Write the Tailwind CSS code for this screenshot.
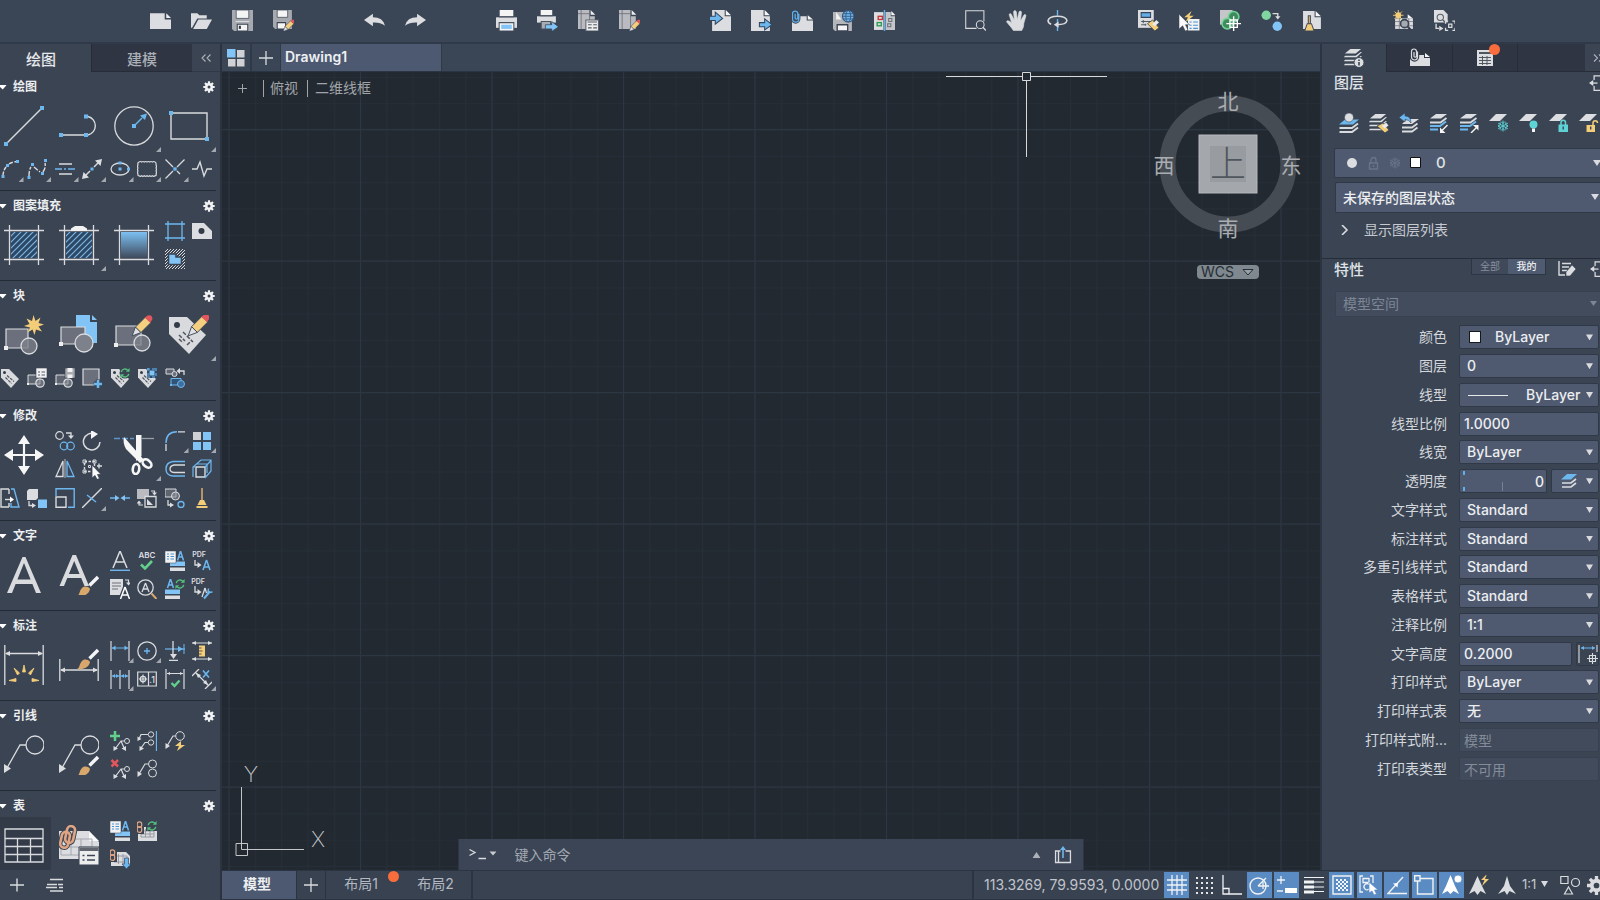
<!DOCTYPE html>
<html lang="zh-CN">
<head>
<meta charset="utf-8">
<meta name="viewport" content="width=device-width, initial-scale=1">
<title>Drawing1</title>
<script src="https://cdn.jsdelivr.net/npm/@tailwindcss/browser@4"></script>
</head>
<body class="flex h-screen flex-col overflow-hidden bg-[#3a4453] font-[Inter,'Noto_Sans_CJK_SC',sans-serif] text-sm text-[#dfe2e6] [&_svg]:shrink-0 [&_svg]:fill-none [&_svg]:stroke-[#d9dbde]">

<svg class="absolute size-0" aria-hidden="true">
<defs>
  <linearGradient id="fade" x1="0" y1="0" x2="0" y2="1"><stop offset="0" stop-color="#7cc0f3"/><stop offset="1" stop-color="#3f4a5c"/></linearGradient>
  <pattern id="minor" width="26.3" height="26.3" patternUnits="userSpaceOnUse" x="6.5" y="5"><path d="M0 .5H27M.5 0V27" stroke="#262e37"/></pattern>
  <pattern id="major" width="131.5" height="131.5" patternUnits="userSpaceOnUse" x="138" y="57"><path d="M0 .5H132M.5 0V132" stroke="#2d3644"/></pattern>
  <pattern id="hatch" width="6" height="6" patternUnits="userSpaceOnUse"><path d="M-1 7L7 -1M-1 1L1 -1M5 7L7 5" stroke="#7fb4de" stroke-width="1.2"/></pattern>
  <pattern id="hatch2" width="3" height="3" patternUnits="userSpaceOnUse"><path d="M-1 4L4 -1M-1 1L1 -1M2 4L4 2" stroke="#d9dbde" stroke-width="1"/></pattern>
</defs>

<!-- shared parts -->
<symbol id="brush" viewBox="0 0 22 22"><path d="M21 2L12.500 10.500" stroke="#f4f5f6" stroke-width="3.400"/><path d="M0 21c3-1 2-5 5-8 3-3 7-1 8 1-1 6-8 8-13 7z" fill="#d8a76c" stroke="none"/></symbol>
<symbol id="pencil" viewBox="0 0 20 20"><path d="M4 11L13 2l5 5-9 9z" fill="#f3cf7f" stroke="#3a4453" stroke-width=".8"/><path d="M12.500 2.500L15 .5q3-1 4 1t0 3L17.500 7z" fill="#e2565d" stroke="none"/><path d="M4 11l5 5-8 3z" fill="#dfe1e4" stroke="#3a4453" stroke-width=".8"/></symbol>
<symbol id="cycle" viewBox="0 0 12 12"><path d="M1.500 5a4.500 4.500 0 0 1 8-2M10.500 7a4.500 4.500 0 0 1-8 2" stroke="#55c07c" stroke-width="1.700"/><path d="M11.500 0v4.500H7zM.5 12V7.500H5z" fill="#55c07c" stroke="none"/></symbol>
<symbol id="gear" viewBox="0 0 12 12"><path d="M6 .3V11.700M.3 6H11.700M2 2L10 10M10 2L2 10" stroke="#f2f3f5" stroke-width="2.200"/><circle cx="6" cy="6" r="2.900" stroke="#f2f3f5" stroke-width="2.200"/><circle cx="6" cy="6" r="1.500" fill="#3a4453" stroke="none"/></symbol>
<symbol id="link" viewBox="0 0 8 16"><rect x="1.200" y="1" width="5.500" height="7" rx="2.700" stroke="#e0a483" stroke-width="1.500"/><rect x="1.200" y="7" width="5.500" height="7" rx="2.700" stroke="#e0a483" stroke-width="1.500"/></symbol>
<symbol id="stack" viewBox="0 0 20 20"><g fill="#dcdde0" stroke="none"><path d="M7 1H19L13 6H1z"/><path d="M1 8.500H13L18.500 4.500H20L14 10.300H0z"/><path d="M1 13H13L18.500 9H20L14 14.800H0z"/><path d="M1 17.500H13L18.500 13.500H20L14 19.300H0z"/></g></symbol>

<!-- top bar -->
<symbol id="new" viewBox="0 0 20 20"><path d="M0 3H14V9H20V18H0z" fill="#dcdde0" stroke="none"/><path d="M15.500 3L20 7.500H15.500z" fill="#eee" stroke="none"/></symbol>
<symbol id="open" viewBox="0 0 20 20"><path d="M0 3H6L8 5H15V8H6L1 17H0z" fill="#dcdde0" stroke="none"/><path d="M7 9H20L15 18H2z" fill="#dcdde0" stroke="none"/></symbol>
<symbol id="save" viewBox="0 0 20 20"><path d="M0 0H20V20H2L0 18z" fill="#a6a9af" stroke="none"/><path d="M4 0H16V8H4z" fill="#f4f4f4" stroke="#4b5361" stroke-width=".8"/><path d="M3.500 11H16.500" stroke="#d9dbde"/><path d="M5 13.500H15V20H5z" fill="#f4f4f4" stroke="#3c4452"/><path d="M6.500 15h2v3h-2z" fill="#333b48" stroke="none"/></symbol>
<symbol id="saveas" viewBox="0 0 20 20"><path d="M0 0H18V18H2L0 16z" fill="#a6a9af" stroke="none"/><path d="M4 0H14V7H4z" fill="#f4f4f4" stroke="#4b5361" stroke-width=".8"/><path d="M4 12H12V18H4z" fill="#f4f4f4" stroke="#3c4452"/><use href="#pencil" x="9" y="9" width="12" height="12"/></symbol>
<symbol id="undo" viewBox="0 0 20 20"><path d="M0 9.500L8.500 3.500V7Q18 7 20 15Q15 11.500 8.500 12V15.500z" fill="#dcdde0" stroke="none"/></symbol>
<symbol id="redo" viewBox="0 0 20 20"><path d="M20 9.500L11.500 3.500V7Q2 7 0 15Q5 11.500 11.500 12V15.500z" fill="#dcdde0" stroke="none"/></symbol>
<symbol id="print" viewBox="0 0 20 20"><path d="M3.500 0H16.500V6H3.500z" fill="#f4f4f4" stroke="none"/><path d="M0 7H20V17H0z" fill="#dcdde0" stroke="none"/><path d="M3 6.500H17" stroke="#4b5361"/><path d="M3 12H17V20H3z" fill="#f4f4f4" stroke="#4b5361"/><path d="M5 14H15V18H5z" fill="#82c4f5" stroke="none"/></symbol>
<symbol id="printsend" viewBox="0 0 20 20"><path d="M3.500 0H14.500V5H3.500z" fill="#f4f4f4" stroke="none"/><path d="M0 6H18V12H0z" fill="#dcdde0" stroke="none"/><path d="M3 5.500H15" stroke="#4b5361"/><path d="M4 11H13V18H4z" fill="#a9adb3" stroke="#4b5361"/><path d="M8 14H14V11L20.500 16 14 20.500V18H8z" fill="#82c4f5" stroke="#34465c" stroke-width=".7"/></symbol>
<symbol id="pageset" viewBox="0 0 20 20"><path d="M0 0H11V6H16V18H0z" fill="#b9bbc0" stroke="none"/><path d="M12 0L16.500 4.500H12z" fill="#eee" stroke="none"/><path d="M3 0V18M0 3.500H12M11 0V18" stroke="#6c7078" stroke-width=".8"/><path d="M7.500 9.500H19.500V20H7.500z" fill="#eceded" stroke="#5c626d"/><path d="M9.500 14H13M14.500 14H18M9.500 17H13M14.500 17H18M9 11.500H18" stroke="#555b66"/></symbol>
<symbol id="pageedit" viewBox="0 0 20 20"><path d="M0 0H11V6H16V18H0z" fill="#b9bbc0" stroke="none"/><path d="M12 0L16.500 4.500H12z" fill="#eee" stroke="none"/><path d="M3 0V18M0 3.500H12M11 0V18" stroke="#6c7078" stroke-width=".8"/><use href="#pencil" x="9" y="9" width="12" height="12"/></symbol>
<symbol id="import" viewBox="0 0 20 20"><path d="M2 0H14V6H20V20H2z" fill="#dcdde0" stroke="none"/><path d="M15 0L20 5H15z" fill="#f7f7f7" stroke="none"/><path d="M-1 6H5V2L12 8 5 13.500V10H-1z" fill="#6db7ef" stroke="#34465c"/></symbol>
<symbol id="export" viewBox="0 0 20 20"><path d="M0 0H12V6H18V20H0z" fill="#dcdde0" stroke="none"/><path d="M13 0L18 5H13z" fill="#f7f7f7" stroke="none"/><path d="M8 12H13V8.500L20 14 13 19V16H8z" fill="#6db7ef" stroke="#34465c"/></symbol>
<symbol id="attach" viewBox="0 0 20 20"><path d="M0 6H14V10H20V20H0z" fill="#dcdde0" stroke="none"/><path d="M15 5L20 9H15z" fill="#f7f7f7" stroke="none"/><path d="M6.500 3.500V8.500a3 3 0 0 1-6 0V3.500a2.500 2.500 0 0 1 5 0V8a1.500 1.500 0 0 1-2.500 0V3.500" stroke="#3a4453" stroke-width="3"/><path d="M6.500 3.500V8.500a3 3 0 0 1-6 0V3.500a2.500 2.500 0 0 1 5 0V8a1.500 1.500 0 0 1-2.500 0V3.500" stroke="#5fb0ec" stroke-width="1.200"/></symbol>
<symbol id="saveweb" viewBox="0 0 20 20"><path d="M0 2H18V20H2L0 18z" fill="#b4b6bb" stroke="none"/><path d="M4 14H14V20H4z" fill="#f4f4f4" stroke="#3c4452" stroke-width="1.300"/><path d="M3 2V9H8" fill="#f4f4f4" stroke="none"/><circle cx="14.500" cy="6" r="5.500" fill="#6db7ef" stroke="#35557a"/><ellipse cx="14.500" cy="6" rx="2.300" ry="5.500" stroke="#35557a" stroke-width=".8"/><path d="M9 6H20M10 3.500H19M10 8.500H19" stroke="#35557a" stroke-width=".8"/></symbol>
<symbol id="compare" viewBox="0 0 20 20"><path d="M0 2H9V19H0z" fill="#dcdde0" stroke="none"/><path d="M11 2H16V6H20V19H11z" fill="#c3c5c9" stroke="none"/><path d="M16.500 1L20.500 5H16.500z" fill="#f7f7f7" stroke="none"/><path d="M10 0V20" stroke="#62aee6" stroke-width="1.400"/><rect x="4" y="6" width="4" height="3" stroke="#c33" stroke-width="1.300"/><rect x="3" y="12" width="4" height="3" stroke="#2b9a55" stroke-width="1.300"/><path d="M14 8h3v3h-3zM13 13h3v3h-3z" stroke="#6b7078"/></symbol>
<symbol id="zoomwin" viewBox="0 0 20 20"><path d="M11 17.500H.7V.7H18V11"/><circle cx="14.500" cy="14" r="3.700"/><path d="M17 16.500L20 19.500" stroke-width="1.400"/></symbol>
<symbol id="pan" viewBox="0 0 20 20"><path d="M7 19.500C5 16 2 13.500.5 11.200 1 9.500 3 10 5.500 12.500L3 4.500Q3.500 2.500 5 4L8 10 7.200 1.500Q8.500 -.5 9.800 1.500L10.700 9.500 12.500 1.500Q14 .2 14.800 2L13.800 10.500 17.300 4.500Q19 4 19 5.500L17 12.500Q17 17 15 19.500z" fill="#dcdde0" stroke="#dcdde0" stroke-width=".6"/></symbol>
<symbol id="orbit" viewBox="0 0 20 20"><path d="M10 0V5.500M10 8.500V20" stroke="#6db7ef" stroke-width="1.300"/><path d="M4 13.500Q1 12.500 1 10 2 6 10 6T19 10Q18.500 14 9 14" stroke-width="1.500"/><path d="M11 11V17L6.500 14z" fill="#dcdde0" stroke="none"/></symbol>
<symbol id="match" viewBox="0 0 20 20"><path d="M0 0H15V17H0z" fill="#dcdde0" stroke="none"/><path d="M3 2.500H12V7H3z" fill="#62aee6" stroke="#35465c"/><path d="M3 11H12M5 9.500V12.500M3 14H8M7 13V15" stroke="#555b66"/><path d="M9 13L14 9.500 20 17 16 20z" fill="#f4cd79" stroke="#3a4453" stroke-width=".8"/><path d="M13.500 13.500L17.500 9.500 20 12 16 15.500z" fill="#e9eaec" stroke="none"/></symbol>
<symbol id="quicksel" viewBox="0 0 20 20"><path d="M8 8H20V20H8z" fill="#f1f2f3" stroke="#3a4453"/><path d="M10 11.500H12M13.500 11.500H18M10 14.500H12M13.500 14.500H18M10 17.500H12M13.500 17.500H18" stroke="#4a94d2"/><path d="M12 1L5 7H8.500L6 12 14 5.500H10z" fill="#f4cd79" stroke="none"/><path d="M0 4V18L3.500 15 6 20 8.500 19 6.200 14H10z" fill="#fafafa" stroke="#3a4453" stroke-width=".5"/></symbol>
<symbol id="filter" viewBox="0 0 20 20"><path d="M0 0H12V12L0 14z" fill="#c4c6ca" stroke="none"/><circle cx="13" cy="6.500" r="5" fill="#3f8a5e" stroke="#6fd392" stroke-width="1.500"/><circle cx="7" cy="13" r="5" fill="#3f8a5e" stroke="#6fd392" stroke-width="1.500"/><path d="M13 6V20M6 13H20M9.500 9.500h7v7h-7z" stroke="#fff" stroke-width="1.300"/></symbol>
<symbol id="swapc" viewBox="0 0 20 20"><circle cx="5" cy="5" r="4.500" fill="#7fd79f" stroke="none"/><circle cx="15.500" cy="15.500" r="4.500" fill="#82c4f5" stroke="none"/><path d="M11 3.500H16V7" stroke-width="1.300"/><path d="M13.500 6H18.500L16 9z" fill="#dcdde0" stroke="none"/></symbol>
<symbol id="purge" viewBox="0 0 20 20"><path d="M1 1H12V7H18V18H1z" fill="#dcdde0" stroke="none"/><path d="M13 1L18 6H13z" fill="#f7f7f7" stroke="none"/><path d="M6 5.500H8V13H6z" fill="#e5b96b" stroke="#474d58"/><path d="M5 13H9L11.500 20H2.500z" fill="#f4cd79" stroke="#474d58"/></symbol>
<symbol id="viewsun" viewBox="0 0 20 20"><path d="M2 8H19V18H2z" fill="#dcdde0" stroke="none"/><path d="M14 4L19 8H14z" fill="#f7f7f7" stroke="none"/><path d="M2 11H19M2 15H19M6 8V18M15 8V18" stroke="#6b7078" stroke-width=".7"/><circle cx="11" cy="13" r="3.800" stroke="#3a4453" fill="#a5aab1" stroke-width="1.500"/><path d="M14 16L18 20" stroke="#3a4453" stroke-width="2"/><circle cx="5" cy="5" r="2.800" fill="#f4cd79" stroke="none"/><path d="M5 0V10M0 5H10M1.500 1.500L8.500 8.500M8.500 1.500L1.500 8.500" stroke="#f4cd79" stroke-width=".9"/></symbol>
<symbol id="viewmove" viewBox="0 0 20 20"><path d="M0 0H9L13 4V12H0z" fill="#dcdde0" stroke="none"/><circle cx="6" cy="7" r="3" stroke="#555b66"/><path d="M8.500 9.500L12 13" stroke="#555b66" stroke-width="1.400"/><path d="M2 13V17.500H5" stroke-width="1.300"/><path d="M5 15V20L9 17.500z" fill="#dcdde0" stroke="none"/><path d="M11 13V10.500H13.500M17.500 10.500H20V13M20 17V19.500H17.500M13.500 19.500H11V17M14 13.500h3v3h-3z" stroke-width="1.200"/></symbol>

<!-- draw -->
<symbol id="line" viewBox="0 0 40 40"><path d="M3 37L37 3" stroke-width="1.400"/><path d="M0 36h4v4H0zM36 0h4v4h-4z" fill="#6db7ef" stroke="none"/></symbol>
<symbol id="pline" viewBox="0 0 40 40"><path d="M2 29H27M29 29A9.500 9.500 0 0 0 29 10.500" stroke-width="1.400"/><path d="M0 27h4v4H0zM25 27h4v4h-4zM25 8.500h4v4h-4z" fill="#6db7ef" stroke="none"/></symbol>
<symbol id="circle" viewBox="0 0 40 40"><circle cx="20" cy="20" r="19.200" stroke-width="1.300"/><path d="M20 20L28 12" stroke="#6db7ef" stroke-width="1.400"/><path d="M33 7.500L31 14 26 9.500z" fill="#6db7ef" stroke="none"/><path d="M18 18h4v4h-4z" fill="#6db7ef" stroke="none"/></symbol>
<symbol id="rect" viewBox="0 0 40 40"><path d="M2 7H38V33H2z" stroke-width="1.400"/><path d="M0 5h4v4H0zM36 31h4v4h-4z" fill="#6db7ef" stroke="none"/></symbol>
<symbol id="arc" viewBox="0 0 20 20"><path d="M3 17Q3 12 6 8M9 5Q12 3 17 2.500" stroke-width="1.400" stroke-dasharray="4.500 1.500"/><path d="M1.500 16h3v3h-3zM6 5h3v3H6zM16 1h3v3h-3z" fill="#6db7ef" stroke="none"/></symbol>
<symbol id="spline" viewBox="0 0 20 20"><path d="M2 17Q2 11 4 8M7 8L13 13M16 13Q19 9 18 4" stroke-width="1.400" stroke-dasharray="5 1.500"/><path d="M.5 17h3v3h-3zM4 4h3v3H4zM14 13h3v3h-3zM17 0h3v3h-3z" fill="#6db7ef" stroke="none"/></symbol>
<symbol id="mline" viewBox="0 0 20 20"><path d="M4 5H17M4 15H17" stroke-width="1.300"/><path d="M0 10H7M9 10H11M13 10H20" stroke="#6db7ef" stroke-width="1.300"/></symbol>
<symbol id="ray" viewBox="0 0 20 20"><path d="M3 17L17 3" stroke-width="1.400"/><path d="M20 0L18.500 7 13 1.500zM0 20L1.500 13 7 18.500z" fill="#dcdde0" stroke="none"/><path d="M8 8h4v4H8z" fill="#6db7ef" stroke="#3a4453"/></symbol>
<symbol id="ellipse" viewBox="0 0 20 20"><ellipse cx="10" cy="10" rx="9" ry="6" stroke-width="1.300"/><path d="M8.500 2.500h3v3h-3zM8.500 8.500h3v3h-3zM17 8.500h3v3h-3z" fill="#6db7ef" stroke="none"/></symbol>
<symbol id="cloud" viewBox="0 0 20 20"><path d="M2 3q1.300-1 2.600 0 1.400-1 2.700 0 1.400-1 2.700 0 1.400-1 2.700 0 1.400-1 2.700 0 1.300-1 2.600 0 1.500.7 1 3 1 1.500 0 3 1 1.500 0 3 1 1.500 0 3 .7 1.800-1 1.800-1.300 1-2.600 0-1.400 1-2.700 0-1.400 1-2.700 0-1.400 1-2.700 0-1.400 1-2.700 0-1.300 1-2.600 0-1.500-.3-1-1.800-1-1.500 0-3-1-1.500 0-3-1-1.500 0-3Q.3 3.500 2 3z" stroke-width="1.200"/></symbol>
<symbol id="xline" viewBox="0 0 20 20"><path d="M.5 .5L8 8M19.500 .5L12 8M.5 19.500L8 12M12 12L15 15" stroke-width="1.300"/><path d="M8.300 8.300h3.400v3.400H8.300z" fill="#6db7ef" stroke="none"/></symbol>
<symbol id="breakl" viewBox="0 0 20 20"><path d="M0 10H5L8 3 12 17 15 10H20" stroke-width="1.400"/></symbol>

<!-- hatch -->
<symbol id="fill" viewBox="0 0 40 40"><path d="M7 7H33V33H7z" fill="#2b4866" stroke="none"/><path d="M7 7H33V33H7z" fill="url(#hatch)" stroke="none"/><path d="M0 5.500H40M0 34.500H40M5.500 0V40M34.500 0V40" stroke-width="1.300"/></symbol>
<symbol id="fill2" viewBox="0 0 40 40"><path d="M7 7H33V33H7z" fill="#2b4866" stroke="none"/><path d="M7 7H33V33H7z" fill="url(#hatch)" stroke="none"/><path d="M0 5.500H40M0 34.500H40M5.500 0V40M34.500 0V40" stroke-width="1.300"/><path d="M12 6V3.500L16 1H24L28 3.500V6z" fill="#f2f2f2" stroke="none"/></symbol>
<symbol id="gradient" viewBox="0 0 40 40"><path d="M7 7H33V33H7z" fill="url(#fade)" stroke="none"/><path d="M0 5.500H40M0 34.500H40M5.500 0V40M34.500 0V40" stroke-width="1.300"/></symbol>
<symbol id="boundary" viewBox="0 0 20 20"><path d="M0 3H20M0 17H20M3 0V20M17 0V20" stroke="#6db7ef" stroke-width="1.300"/></symbol>
<symbol id="wipe" viewBox="0 0 20 20"><path d="M0 2H12L20 10V18H0z" fill="#dcdde0" stroke="none"/><circle cx="9.500" cy="10" r="3" fill="#333b48" stroke="none"/></symbol>
<symbol id="region" viewBox="0 0 20 20"><path d="M0 0H20V20H0z" fill="url(#hatch2)" stroke="none"/><path d="M3.500 5H11V8H16.500V15.500H3.500z" fill="#82c4f5" stroke="#3a4453" stroke-width="1.600"/></symbol>

<!-- block -->
<symbol id="blk" viewBox="0 0 40 40"><path d="M2 14H24V33H2z" fill="#6c707c" stroke-width="1.200"/><circle cx="25" cy="31" r="8" fill="#7d818b" fill-opacity=".8" stroke-width="1.300"/><path d="M0 31h4v4H0z" fill="#eee" stroke="none"/></symbol>
<symbol id="blknew" viewBox="0 0 40 40"><use href="#blk" width="40" height="40"/><path d="M29.500 0l2 6 5-3.500-2 5.500 5.500 1.500-5.500 2 3.500 5-6-2-1.500 5.500-2-5.500-5 3 2.500-5-6-1.500 5.500-2-3-5.500 5.500 2.500z" fill="#f4cd79" stroke="none"/></symbol>
<symbol id="blkins" viewBox="0 0 40 40"><path d="M17 0H31V7H38V28H17z" fill="#82c4f5" stroke="none"/><path d="M33 0L38 5H33z" fill="#82c4f5" stroke="none"/><path d="M2 12H26V29H2z" fill="#6c707c" stroke-width="1.200"/><circle cx="25" cy="28" r="9" fill="#7d818b" stroke-width="1.300"/><path d="M0 27h4v4H0z" fill="#eee" stroke="none"/></symbol>
<symbol id="blkedit" viewBox="0 0 40 40"><path d="M2 11H27V30H2z" fill="#6c707c" stroke-width="1.200"/><circle cx="28" cy="28" r="8" fill="#7d818b" fill-opacity=".8" stroke-width="1.300"/><path d="M0 28h4v4H0z" fill="#eee" stroke="none"/><use href="#pencil" x="17" y="0" width="22" height="22"/></symbol>
<symbol id="tagedit" viewBox="0 0 40 40"><path d="M0 2H18L37 20 20 39 0 19z" fill="#d9dadd" stroke="none"/><circle cx="8" cy="10" r="3" fill="#333b48" stroke="none"/><path d="M10 20l6 6M14 17l10 10M10 24l4 4M18 30l4-4" stroke="#50565f" stroke-width="1.500" stroke-dasharray="4 1.500"/><use href="#pencil" x="18" y="-1" width="23" height="23"/></symbol>
<symbol id="tag" viewBox="0 0 20 20"><path d="M1 1H9L19 11 11 20 1 9.500z" fill="#d9dadd" stroke="none"/><circle cx="4.500" cy="4.500" r="1.500" fill="#333b48" stroke="none"/><path d="M7 7.500l7 6M5.500 9.500l6 6" stroke="#50565f" stroke-width="1.200" stroke-dasharray="3 1"/></symbol>
<symbol id="blks" viewBox="0 0 20 20"><path d="M1 7H13V16H1z" fill="#5e6470"/><circle cx="13" cy="15" r="4.200" fill="#8a8e96" fill-opacity=".6" stroke-width="1.200"/><path d="M0 15h2v2H0z" fill="#eee" stroke="none"/></symbol>
<symbol id="blk1" viewBox="0 0 20 20"><use href="#blks" width="20" height="20"/><path d="M9 0H20V10H9z" fill="#f1f1f2" stroke="#3a4453" stroke-width=".6"/><path d="M11 4H13M14.500 4H18M11 7H13M14.500 7H18" stroke="#555b66" stroke-width="1.200"/></symbol>
<symbol id="blk2" viewBox="0 0 20 20"><use href="#blks" width="20" height="20"/><path d="M10 0H20V10H10z" fill="#a6a9af" stroke="#3a4453" stroke-width=".6"/><path d="M12.500 0H17.500V4H12.500zM12.500 6.500h5V10h-5z" fill="#f1f1f2" stroke="none"/></symbol>
<symbol id="blk3" viewBox="0 0 20 20"><path d="M1 1H17V17H1z" fill="#6c707c" stroke-width="1.200"/><path d="M16 11.500V20M11.800 15.800H20" stroke="#3a4453" stroke-width="4.500"/><path d="M16 12V20M12 16H20" stroke="#6db7ef" stroke-width="2.500"/></symbol>
<symbol id="tagsync" viewBox="0 0 20 20"><use href="#tag" width="20" height="20"/><circle cx="15" cy="5" r="5.500" fill="#3a4453" stroke="none"/><use href="#cycle" x="10" y="0" width="10" height="10"/></symbol>
<symbol id="tagmgr" viewBox="0 0 20 20"><use href="#tag" width="20" height="20"/><path d="M10 0H20V10H10z" fill="#2f4a68" stroke="none"/><path d="M12.500 2.500h5v5h-5z" fill="#82c4f5" stroke="none"/><path d="M11 0V10M19 0V10M10 1H20M10 9H20" stroke="#6db7ef" stroke-dasharray="3 2"/></symbol>
<symbol id="blkrep" viewBox="0 0 20 20"><path d="M1 1H9V6H1z" fill="#5e6470"/><circle cx="9.500" cy="6" r="2.500" fill="#6c707c"/><path d="M14 3H19V7" stroke-width="1.300"/><path d="M15 0V6L11.500 3z" fill="#dcdde0" stroke="none"/><path d="M6 10.500H16V17H6z" fill="#2f5478" stroke="#6db7ef"/><circle cx="16" cy="16" r="3.500" fill="#3f6f9c" stroke="#6db7ef"/><path d="M5 16h2v2H5z" fill="#6db7ef" stroke="none"/></symbol>

<!-- modify -->
<symbol id="move" viewBox="0 0 40 40"><path d="M20 5V35M5 20H35" stroke="#f6f6f7" stroke-width="2.200"/><path d="M20 0l6 9H14zM20 40l6-9H14zM0 20l9-6v12zM40 20l-9-6v12z" fill="#f6f6f7" stroke="none"/></symbol>
<symbol id="copy" viewBox="0 0 20 20"><circle cx="4.500" cy="4.500" r="3.800" stroke-width="1.200"/><path d="M11 2H16V5" stroke-width="1.300"/><path d="M13 4.500H19L16 8z" fill="#dcdde0" stroke="none"/><g stroke="#6db7ef" stroke-width="1.200"><circle cx="9" cy="15" r="3.800"/><circle cx="15.500" cy="15" r="3.800"/></g></symbol>
<symbol id="rotate" viewBox="0 0 20 20"><path d="M13 3A8.300 8.300 0 1 0 18 11" stroke-width="1.500"/><path d="M9 -1L16 3 9 8z" fill="#f6f6f7" stroke="none"/></symbol>
<symbol id="mirror" viewBox="0 0 20 20"><path d="M8 2V17.500H1z" stroke-width="1.300"/><path d="M12 2V17.500H19z" stroke="#6db7ef" stroke-width="1.300"/><path d="M10 0V19" stroke-width=".8"/></symbol>
<symbol id="selmove" viewBox="0 0 20 20"><path d="M2.500 2.500H12.500V12.500H2.500z" stroke-width="1.400" stroke-dasharray="2.500 1.500"/><path d="M1 1h3v3H1zM11 1h3v3h-3zM1 11h3v3H1zM6.500 6.500h2v2h-2z" stroke-width="1"/><path d="M17 4.500V9.500M15 7H20" stroke-width="1.300"/><path d="M10 6V19L13 16.500 15 20.500 17.500 19.500 15.500 15.500H19z" fill="#fafafa" stroke="#3a4453" stroke-width=".8"/></symbol>
<symbol id="trim" viewBox="0 0 40 40"><path d="M0 3.500H20" stroke="#5b94c6" stroke-width="1.400" stroke-dasharray="6 2"/><path d="M28 3.500H40" stroke="#9aa0a9" stroke-width="1.300"/><path d="M10 2L30 25 26 28 12 14Q8.500 8 10 2zM22 0H27.500V21L22 26z" fill="#f6f6f7" stroke="none"/><ellipse cx="22" cy="34" rx="3.200" ry="5" transform="rotate(8 22 34)" stroke="#f6f6f7" stroke-width="2.600"/><ellipse cx="33" cy="28.500" rx="3.400" ry="5" transform="rotate(-50 33 28.500)" stroke="#f6f6f7" stroke-width="2.600"/></symbol>
<symbol id="fillet" viewBox="0 0 20 20"><path d="M1 12Q1 1 12 .8" stroke="#6db7ef" stroke-width="1.400"/><path d="M1 13V20M13 .8H20" stroke-width="1.300"/></symbol>
<symbol id="array" viewBox="0 0 20 20"><path d="M1 1H9V9H1z" fill="#cfd0d3" stroke="none"/><path d="M11 1H19V9H11zM1 11H9V19H1zM11 11H19V19H11z" fill="#82c4f5" stroke="none"/></symbol>
<symbol id="offset" viewBox="0 0 20 20"><path d="M20 2.500H8Q1 3.500 1 10T8 17H20" stroke="#6db7ef" stroke-width="1.400"/><path d="M20 6H9Q5 7 5 10T9 13.500H20" stroke-width="1.300"/></symbol>
<symbol id="box" viewBox="0 0 20 20"><path d="M4 8H13V18H4z" stroke-width="1.400"/><path d="M1 18V8L9 1H19V12L13 19M13 8L19 1.500M1 8H3M4 5H15V14" stroke="#6db7ef" stroke-width="1.200"/></symbol>
<symbol id="stretch" viewBox="0 0 20 20"><path d="M9 1H1V19H9M9 1V6M9 15V19" stroke-width="1.400"/><path d="M11 1H14L19 19H11V15" stroke="#6db7ef" stroke-width="1.400"/><path d="M5 11.500H11" stroke-width="1.400"/><path d="M10 8.500V14.500L14 11.500z" fill="#fff" stroke="none"/></symbol>
<symbol id="cubes" viewBox="0 0 20 20"><path d="M0 3L2 1H11V10L9 12H0z" fill="#dcdde0" stroke="none"/><path d="M11 11.500H20V20H11z" fill="#82c4f5" stroke="none"/><path d="M2 13V17.500H6" stroke-width="1.300"/><path d="M5 15V20L9 17.500z" fill="#dcdde0" stroke="none"/></symbol>
<symbol id="scale" viewBox="0 0 20 20"><path d="M1 8V.8H19.200V19.200H13" stroke="#6db7ef" stroke-width="1.400"/><path d="M1 9H11V19.200H1z" stroke-width="1.400"/></symbol>
<symbol id="extend" viewBox="0 0 20 20"><path d="M0 20L20 0" stroke-width="1.400"/><path d="M5 7L14 14" stroke="#6db7ef" stroke-width="1.400"/></symbol>
<symbol id="join" viewBox="0 0 20 20"><path d="M0 10H6M20 10H14" stroke="#6db7ef" stroke-width="1.400"/><path d="M5 7V13L9.500 10zM15 7V13L10.500 10z" fill="#82c4f5" stroke="none"/></symbol>
<symbol id="swap" viewBox="0 0 20 20"><path d="M0 1H12V11H0z" fill="#b9bbc0" stroke="none"/><path d="M8 8.500H19V19H8z" stroke-width="1.300" fill="#3a4453"/><path d="M10 11L16 17H10z" fill="#dcdde0" stroke="none"/><path d="M14 3H17.500V5M6 17H2V15" stroke-width="1.200"/><path d="M15 4.500H20L17.500 7.500zM-.5 15.500H4.500L2 12.500z" fill="#dcdde0" stroke="none"/></symbol>
<symbol id="copynest" viewBox="0 0 20 20"><path d="M0 1H11V9H0z" fill="#5e6470"/><circle cx="10.500" cy="8" r="4" fill="#8a8e96" fill-opacity=".6"/><path d="M3 12V17H6" stroke-width="1.300"/><path d="M5 14.500V19.500L9 17z" fill="#dcdde0" stroke="none"/><circle cx="16" cy="16.500" r="3" stroke="#6db7ef" stroke-width="1.400"/></symbol>
<symbol id="broom" viewBox="0 0 20 20"><path d="M10 0V12" stroke="#d8a76c" stroke-width="1.600"/><path d="M8 12H12L14.500 17H5.500zM4.500 18H15.500V20H4.500z" fill="#f4cd79" stroke="none"/></symbol>

<!-- text -->
<symbol id="mtext" viewBox="0 0 40 40"><path d="M18.500 2H21.500L37 38H32L20 8 8 38H3zM11 24.500H29V29H11z" fill="#d9dbde" stroke="none"/></symbol>
<symbol id="mtextb" viewBox="0 0 40 40"><path d="M13.500 0H17L30 31H25.500L15.200 6 5 31H.5zM8 19H23V23H8z" fill="#d9dbde" stroke="none"/><use href="#brush" x="18" y="20" width="22" height="22"/></symbol>
<symbol id="textu" viewBox="0 0 20 20"><path d="M10 0L3 17M10 0L17 17M5.500 11H14.500" stroke-width="1.500"/><path d="M0 19.300H20" stroke="#6db7ef" stroke-width="1.400"/></symbol>
<symbol id="styleA" viewBox="0 0 20 20"><path d="M5 10.500H20V15H5z" fill="#82c4f5" stroke="none"/><path d="M5 16.500H20V20H5z" fill="#dcdde0" stroke="none"/><path d="M0 0H11V12H0z" fill="#f1f1f2" stroke="#3a4453" stroke-width=".5"/><path d="M2 3H4M5.500 3H9M2 5.500H4M5.500 5.500H9M2 8H4M5.500 8H9" stroke="#4a94d2" stroke-width="1.200"/><path d="M15.500 0L12.500 9.500M15.500 0L18.500 9.500M13.500 6H17.500" stroke="#6db7ef" stroke-width="1.500"/></symbol>
<symbol id="textnote" viewBox="0 0 20 20"><path d="M0 0H13V12L10 16H0z" fill="#dcdde0" stroke="none"/><path d="M2 4H11M2 7H11M2 10H8" stroke="#6b7078"/><path d="M15 1H18.500V4" stroke-width="1.200"/><path d="M16 3.500H21L18.500 6.500z" fill="#dcdde0" stroke="none"/><path d="M15 8L10.500 20M15 8L19.500 20M12 16H18" stroke="#3a4453" stroke-width="4"/><path d="M15 8L10.500 20M15 8L19.500 20M12 16H18" stroke="#fff" stroke-width="1.500"/></symbol>
<symbol id="findA" viewBox="0 0 20 20"><circle cx="8.500" cy="8.500" r="7.700" stroke-width="1.300"/><path d="M8.500 4L5 13M8.500 4L12 13M6.500 10H10.500" stroke-width="1.300"/><path d="M14.500 14.500L19.500 20" stroke="#d8a76c" stroke-width="2"/></symbol>
<symbol id="styleup" viewBox="0 0 20 20"><path d="M0 10.500H15V15H0z" fill="#82c4f5" stroke="none"/><path d="M0 16.500H15V20H0z" fill="#dcdde0" stroke="none"/><path d="M5.500 0L2.500 9M5.500 0L8.500 9M3.500 6H7.500" stroke="#6db7ef" stroke-width="1.500"/><use href="#cycle" x="10" y="0" width="10" height="10"/></symbol>

<!-- dimension -->
<symbol id="dim" viewBox="0 0 40 40"><path d="M.8 0V40M39.200 0V40M2 8.500H38" stroke-width="1.300"/><path d="M1 8.500L6 6V11zM39 8.500L34 6V11z" fill="#dcdde0" stroke="none"/><path d="M20 20l1.500 7h-3zM10 23l5.500 5-2 2zM30 23l-5.500 5 2 2zM5 35.500l7-2v3zM35 35.500l-7-2v3z" fill="#f4cd79" stroke="#f4cd79" stroke-width=".8"/></symbol>
<symbol id="dimb" viewBox="0 0 40 40"><path d="M.8 14V36M39.200 14V36M2 25H38" stroke-width="1.300"/><path d="M1 25L6 22.500V27.500zM39 25L34 22.500V27.500z" fill="#dcdde0" stroke="none"/><use href="#brush" x="18" y="3" width="22" height="22"/></symbol>
<symbol id="dimlin" viewBox="0 0 20 20"><path d="M1 0V20M19 0V20" stroke-width="1.200"/><path d="M2 7H18" stroke="#6db7ef"/><path d="M2 7L5.500 4.500V9.500zM18 7L14.500 4.500V9.500z" fill="#6db7ef" stroke="none"/></symbol>
<symbol id="dimrad" viewBox="0 0 20 20"><circle cx="10" cy="10" r="9.200" stroke-width="1.300"/><path d="M10 7V13M7 10H13" stroke="#6db7ef" stroke-width="1.300"/></symbol>
<symbol id="dimord" viewBox="0 0 20 20"><path d="M0 8H20" stroke="#6db7ef" stroke-width="1.200"/><path d="M18 8L13 5V11z" fill="#6db7ef" stroke="none"/><path d="M19 3V13" stroke="#6db7ef"/><path d="M8 0V16M4 19.300H13" stroke-width="1.300"/><path d="M8.500 18L5 13H12z" fill="#dcdde0" stroke="none"/></symbol>
<symbol id="dimspace" viewBox="0 0 20 20"><path d="M0 2H20M0 18H20" stroke-width="1.200"/><path d="M0 2L4 0V4zM20 2L16 0V4zM0 18L4 16V20zM20 18L16 16V20z" fill="#dcdde0" stroke="none"/><path d="M7 4.500H13V15.500H7z" fill="#f4cd79" stroke="none"/><path d="M7 7H9.500M7 10H10.500M7 13H9.500" stroke="#5b5646" stroke-width="1"/></symbol>
<symbol id="dimcont" viewBox="0 0 20 20"><path d="M1 1V20M10 1V20M19 1V20" stroke-width="1.200"/><path d="M2 7H18" stroke="#6db7ef"/><path d="M2 7L5 5V9zM9 7L6 5V9zM11 7L14 5V9zM18 7L15 5V9z" fill="#6db7ef" stroke="none"/></symbol>
<symbol id="dimchk" viewBox="0 0 20 20"><path d="M1 0V20M19 0V20M2 4.500H18" stroke-width="1.200"/><path d="M2 4.500L5 3V6zM18 4.500L15 3V6z" fill="#dcdde0" stroke="none"/><path d="M6.500 14L9.500 17 14.500 11.500" stroke="#62cf8c" stroke-width="2.400"/></symbol>
<symbol id="dimjog" viewBox="0 0 20 20"><path d="M0 7L7 0M13 20L20 13M4 4L16 16" stroke-width="1.300"/><path d="M4 4L9 6 6 9zM16 16L11 14 14 11z" fill="#dcdde0" stroke="none"/><path d="M11 1.500L17 8.500M17 1.500L11 8.500" stroke="#6db7ef" stroke-width="1.600"/></symbol>

<!-- leader -->
<symbol id="leader" viewBox="0 0 40 40"><circle cx="31" cy="10" r="9" stroke-width="1.300"/><path d="M22 10H16L3 33" stroke-width="1.300"/><path d="M0 38V29L7 33.500z" fill="#dcdde0" stroke="none"/></symbol>
<symbol id="leaderb" viewBox="0 0 40 40"><use href="#leader" width="40" height="40"/><use href="#brush" x="18" y="20" width="22" height="22"/></symbol>
<symbol id="lsm" viewBox="0 0 20 20"><circle cx="17" cy="10" r="2.500"/><path d="M14 10H11L5 18M11 10L14.500 18" stroke-width="1.200"/><path d="M3.500 20V15L8 17.500zM16 20V15L11.500 17.500z" fill="#dcdde0" stroke="none"/></symbol>
<symbol id="ladd" viewBox="0 0 20 20"><use href="#lsm" width="20" height="20"/><path d="M5 0V10M0 5H10" stroke="#62cf8c" stroke-width="2.500"/></symbol>
<symbol id="ldel" viewBox="0 0 20 20"><use href="#lsm" width="20" height="20"/><path d="M1.500 1L8 7.500M8 1L1.500 7.500" stroke="#e2565d" stroke-width="2.500"/></symbol>
<symbol id="lalign" viewBox="0 0 20 20"><path d="M19.500 0V20" stroke="#6db7ef" stroke-width="1.300"/><circle cx="14" cy="3.500" r="2.700"/><circle cx="14" cy="11.500" r="2.700"/><path d="M11 3.500H4L2 8M11 11.500H8L4 17" stroke-width="1.200"/><path d="M.5 10V5.500L4.500 8zM2.500 20V15L7 17.500z" fill="#dcdde0" stroke="none"/></symbol>
<symbol id="lquick" viewBox="0 0 20 20"><circle cx="15" cy="5" r="4.300"/><path d="M10.500 5H8L2 15" stroke-width="1.200"/><path d="M.5 18V12L5 15z" fill="#dcdde0" stroke="none"/><path d="M16 10L10 15H14L12 20 20 14H16z" fill="#f4cd79" stroke="none"/></symbol>
<symbol id="lcol" viewBox="0 0 20 20"><circle cx="15.500" cy="5" r="4"/><circle cx="15.500" cy="14" r="4"/><path d="M11.500 5H8L2 15" stroke-width="1.200"/><path d="M.5 18V12L5 15z" fill="#dcdde0" stroke="none"/></symbol>

<!-- table -->
<symbol id="table" viewBox="0 0 40 40"><path d="M1 4H39V37H1zM1 13.500H39M1 21.500H39M1 29.500H39M13.500 13.500V37M26.500 13.500V37" stroke-width="1.300"/></symbol>
<symbol id="datalink" viewBox="0 0 40 40"><path d="M0 6H30L40 17V34H0z" fill="#dcdde0" stroke="none"/><path d="M30 6V16H40z" fill="#f8f8f8" stroke="none"/><path d="M2 14H33V30H2zM2 22H33M12 14V30M22 14V30" stroke="#a3a7ad"/><g stroke="#3a4453" stroke-width="4.500"><rect x="2" y="7" width="8" height="16" rx="4" transform="rotate(12 7 15)"/><rect x="7" y="1" width="8" height="17" rx="4" transform="rotate(12 11 10)"/></g><g stroke="#e0a483" stroke-width="2.600"><rect x="2" y="7" width="8" height="16" rx="4" transform="rotate(12 7 15)"/><rect x="7" y="1" width="8" height="17" rx="4" transform="rotate(12 11 10)"/></g><path d="M20 22H40V40H20z" fill="#eceded" stroke="#3a4453"/><path d="M20.500 22.500H39.500V26H20.500z" fill="#60656f" stroke="none"/><path d="M23.500 30.500H25.500M28 30.500H36M23.500 35H25.500M28 35H36" stroke="#3a4453" stroke-width="1.500"/></symbol>
<symbol id="tsync" viewBox="0 0 20 20"><path d="M1 6H20V20H1z" fill="#dcdde0" stroke="none"/><path d="M4 10H17V16H4zM8.500 8V16M13 8V16M4 13H17" stroke="#8e939b" stroke-width=".9"/><path d="M0 0H7V13H0zM9 0H20V10H9z" fill="#3a4453" stroke="none"/><use href="#link" x="-1" y="0" width="7" height="13"/><use href="#cycle" x="10" y="0" width="10" height="10"/></symbol>
<symbol id="tdown" viewBox="0 0 20 20"><path d="M1 3H16L20 7V17H1z" fill="#dcdde0" stroke="none"/><path d="M4 7H17V13H4zM8.500 5V15M13 5V15" stroke="#8e939b" stroke-width=".9"/><path d="M0 0H7V13H0z" fill="#3a4453" stroke="none"/><use href="#link" x="-1" y="0" width="7" height="13"/><path d="M14.500 9H18.500V15H21L16.500 20 12 15H14.500z" fill="#6db7ef" stroke="#34465c" stroke-width=".7"/></symbol>

<!-- layer tools -->
<symbol id="lyblue" viewBox="0 0 20 20"><path d="M6 6.500H20L14 11.500H0z" fill="#6db7ef" stroke="none"/><circle cx="10" cy="4.500" r="4.500" fill="#dcdde0" stroke="#3a4453" stroke-width=".6"/><path d="M.5 15H13L19 10.500M.5 19H13L19 14.500" stroke-width="1.900"/></symbol>
<symbol id="lybrush" viewBox="0 0 20 20"><use href="#stack" width="18" height="18"/><path d="M8 13L14 10 20 17 16 20z" fill="#f4cd79" stroke="#3a4453" stroke-width=".8"/><path d="M13 13L17 9.500 19.500 12.500 15.500 15.500z" fill="#e9eaec" stroke="none"/></symbol>
<symbol id="lyback" viewBox="0 0 20 20"><path d="M8 6H20L13 11H3z" fill="#dcdde0" stroke="none"/><path d="M3 14.500H13L18.500 10.500M3 18.500H13L18.500 14.500" stroke-width="1.800"/><path d="M0 4.500L6 0V3Q12 3 12 10Q10 6.500 6 6.500V9z" fill="#6db7ef" stroke="#34465c" stroke-width=".6"/></symbol>
<symbol id="lyfront" viewBox="0 0 20 20"><path d="M7 1H18L12 5.500H1z" fill="#dcdde0" stroke="none"/><path d="M1 9.500H11.500L17.500 5" stroke-width="1.900"/><path d="M1 13H11L17 8.500M1 16.500H9" stroke="#6db7ef" stroke-width="1.900"/></symbol>
<symbol id="lyin" viewBox="0 0 20 20"><use href="#lyfront" width="20" height="20"/><path d="M18.500 12L13 17.500" stroke="#f4f4f4" stroke-width="1.400"/><path d="M11 14.500V20H16.500z" fill="#f4f4f4" stroke="none"/></symbol>
<symbol id="lyout" viewBox="0 0 20 20"><use href="#lyfront" width="20" height="20"/><path d="M12 20L17.500 14.500" stroke="#f4f4f4" stroke-width="1.400"/><path d="M14 12H19.500V17.500z" fill="#f4f4f4" stroke="none"/></symbol>
<symbol id="flake" viewBox="0 0 12 12"><path d="M6 .5V11.500M1.200 3.200L10.800 8.800M10.800 3.200L1.200 8.800M4 1.500L6 3.500 8 1.500M4 10.500L6 8.500 8 10.500M1 5.500L3.500 5 3 2.300M11 5.500L8.500 5 9 2.300M1 6.500L3.500 7 3 9.700M11 6.500L8.500 7 9 9.700" stroke-width="1"/></symbol>
<symbol id="lyfreeze" viewBox="0 0 20 20"><path d="M7 1H18L11 8H0z" fill="#dcdde0" stroke="none"/><g stroke="#5fd2d6"><use href="#flake" x="8" y="7" width="12" height="12"/></g></symbol>
<symbol id="lybulb" viewBox="0 0 20 20"><path d="M7 1H18L11 8H0z" fill="#dcdde0" stroke="none"/><circle cx="14.500" cy="11.500" r="4" fill="#5fd2d6" stroke="none"/><path d="M13 15.500H16V19H13z" fill="#f4f4f4" stroke="none"/></symbol>
<symbol id="lylock" viewBox="0 0 20 20"><path d="M7 1H18L11 8H0z" fill="#dcdde0" stroke="none"/><path d="M12 12V9.500a2.200 2.200 0 0 1 4.500 0V12" stroke="#5fd2d6" stroke-width="1.500"/><path d="M9.500 11.500H19V19H9.500z" fill="#5fd2d6" stroke="none"/><path d="M14.200 13.500V16.500" stroke="#35465c" stroke-width="1.400"/></symbol>
<symbol id="lyunlock" viewBox="0 0 20 20"><path d="M7 1H18L11 8H0z" fill="#dcdde0" stroke="none"/><path d="M14 12V10a2.200 2.200 0 0 1 4.500 0" stroke="#f4cd79" stroke-width="1.500"/><path d="M7.500 12H16V19H7.500z" fill="#f4cd79" stroke="none"/><path d="M11.700 13.500V16.500" stroke="#35465c" stroke-width="1.400"/></symbol>
<symbol id="lyinfo" viewBox="0 0 20 20"><use href="#stack" width="18" height="18"/><circle cx="15" cy="14.500" r="5" fill="#dcdde0" stroke="#3a4453"/><path d="M15 11.500V13M15 14V17.500" stroke="#3a4453" stroke-width="1.600"/></symbol>
<symbol id="dock" viewBox="0 0 20 20"><path d="M6 6V1H20M6 13V18H20" stroke-width="1.500"/><path d="M2 9.500H10" stroke-width="1.500"/><path d="M0 9.500L5 6V13z" fill="#dcdde0" stroke="none"/></symbol>
</svg>

<!-- Toolbar -->
<header class="flex h-[44px] shrink-0 items-center gap-[70px] border-b-2 border-[#2f3947] bg-[#3a4555] pt-[2px] pb-[4px] pl-[150px] [&>div]:flex [&>div]:gap-5 [&_button]:w-[21px] [&_svg]:size-[21px]">
  <div>
    <button aria-label="新建"><svg><use href="#new"/></svg></button><button aria-label="打开"><svg><use href="#open"/></svg></button><button aria-label="保存"><svg><use href="#save"/></svg></button><button aria-label="另存为"><svg><use href="#saveas"/></svg></button>
  </div>
  <div>
    <button aria-label="放弃"><svg><use href="#undo"/></svg></button><button aria-label="重做"><svg><use href="#redo"/></svg></button>
  </div>
  <div>
    <button aria-label="打印"><svg><use href="#print"/></svg></button><button aria-label="批处理打印"><svg><use href="#printsend"/></svg></button><button aria-label="页面设置"><svg><use href="#pageset"/></svg></button><button aria-label="编辑页面"><svg><use href="#pageedit"/></svg></button>
  </div>
  <div>
    <button aria-label="输入"><svg><use href="#import"/></svg></button><button aria-label="输出"><svg><use href="#export"/></svg></button><button aria-label="附着"><svg><use href="#attach"/></svg></button><button aria-label="保存到网络"><svg><use href="#saveweb"/></svg></button><button aria-label="图形比较"><svg><use href="#compare"/></svg></button>
  </div>
  <div>
    <button aria-label="窗口缩放"><svg><use href="#zoomwin"/></svg></button><button aria-label="平移"><svg><use href="#pan"/></svg></button><button aria-label="动态观察"><svg><use href="#orbit"/></svg></button>
  </div>
  <div>
    <button aria-label="特性匹配"><svg><use href="#match"/></svg></button><button aria-label="快速选择"><svg><use href="#quicksel"/></svg></button><button aria-label="选择类似"><svg><use href="#filter"/></svg></button><button aria-label="图层转换"><svg><use href="#swapc"/></svg></button><button aria-label="清理"><svg><use href="#purge"/></svg></button>
  </div>
  <div>
    <button aria-label="新建视图"><svg><use href="#viewsun"/></svg></button><button aria-label="插入视图"><svg><use href="#viewmove"/></svg></button>
  </div>
</header>

<div class="flex min-h-0 flex-1">

  <!-- Tool sets -->
  <aside class="flex w-[222px] shrink-0 flex-col overflow-hidden border-r-2 border-[#2b3340] bg-[#3b4453]">
    <div class="flex h-7 shrink-0 text-[15px] font-medium">
      <button class="w-[91px] pr-[9px] pt-1 text-[#e6e8eb]">绘图</button>
      <button class="flex-1 border-b border-l border-[#262d39] bg-[#2f3543] pt-1 text-[#a9aeb7]">建模</button>
      <button class="flex w-[28px] items-center justify-center border-b border-[#2f3947]" aria-label="折叠"><svg class="h-[8px] w-[10px]" viewBox="0 0 10 8"><path d="M4.500 .5L1 4 4.500 7.500M9.500 .5L6 4 9.500 7.500" stroke="#aeb3bb" stroke-width="1.100"/></svg></button>
    </div>
    <div class="min-h-0 flex-1 overflow-hidden [&_button]:relative [&_button]:flex [&_button]:items-center [&_button]:justify-center [&_svg]:size-5 [&_.col-span-2>svg]:size-10 [&_i]:absolute [&_i]:right-0 [&_i]:bottom-[2px] [&_i]:size-[5px] [&_i]:bg-[#a2a7b0] [&_i]:[clip-path:polygon(100%_0,100%_100%,0_100%)] [&_header]:flex [&_header]:h-[26px] [&_header]:items-center [&_header]:pt-1 [&_header]:text-xs [&_header]:font-semibold [&_header]:text-[#eceef0] [&_header>span]:mr-[6px] [&_header>span]:h-[5px] [&_header>span]:w-[7px] [&_header>span]:bg-white [&_header>span]:[clip-path:polygon(0_0,100%_0,40%_100%,0_50%)] [&_header_svg]:size-3 [&_header_button]:ml-auto [&_header_button]:mr-px [&_section]:mr-1 [&_section]:border-b [&_section]:border-[#232b37] [&_section>div]:-ml-1 [&_section>div]:grid [&_section>div]:w-[220px] [&_section>div]:grid-cols-8 [&_section>div]:grid-rows-[28px_28px_30px]">
      <section class="h-[119px]">
        <header><span></span>绘图<button aria-label="绘图设置"><svg><use href="#gear"/></svg></button></header>
        <div>
          <button class="col-span-2 row-span-2" aria-label="直线"><svg><use href="#line"/></svg></button><button class="col-span-2 row-span-2" aria-label="多段线"><svg><use href="#pline"/></svg></button><button class="col-span-2 row-span-2" aria-label="圆"><svg><use href="#circle"/></svg><i></i></button><button class="col-span-2 row-span-2" aria-label="矩形"><svg><use href="#rect"/></svg><i></i></button>
          <button aria-label="圆弧"><svg><use href="#arc"/></svg><i></i></button><button aria-label="样条曲线"><svg><use href="#spline"/></svg><i></i></button><button aria-label="多线"><svg><use href="#mline"/></svg><i></i></button><button aria-label="构造线"><svg><use href="#ray"/></svg><i></i></button><button aria-label="椭圆"><svg><use href="#ellipse"/></svg><i></i></button><button aria-label="修订云线"><svg><use href="#cloud"/></svg><i></i></button><button aria-label="点"><svg><use href="#xline"/></svg><i></i></button><button aria-label="折断线"><svg><use href="#breakl"/></svg></button>
        </div>
      </section>
      <section class="h-[90px]">
        <header><span></span>图案填充<button aria-label="图案填充设置"><svg><use href="#gear"/></svg></button></header>
        <div>
          <button class="col-span-2 row-span-2" aria-label="图案填充"><svg><use href="#fill"/></svg></button><button class="col-span-2 row-span-2" aria-label="编辑填充"><svg><use href="#fill2"/></svg><i></i></button><button class="col-span-2 row-span-2" aria-label="渐变色"><svg><use href="#gradient"/></svg></button>
          <button aria-label="边界"><svg><use href="#boundary"/></svg></button><button aria-label="区域覆盖"><svg><use href="#wipe"/></svg></button><button aria-label="面域"><svg><use href="#region"/></svg></button>
        </div>
      </section>
      <section class="h-[120px]">
        <header><span></span>块<button aria-label="块设置"><svg><use href="#gear"/></svg></button></header>
        <div>
          <button class="col-span-2 row-span-2" aria-label="创建块"><svg><use href="#blknew"/></svg></button><button class="col-span-2 row-span-2" aria-label="插入块"><svg><use href="#blkins"/></svg></button><button class="col-span-2 row-span-2" aria-label="编辑块"><svg><use href="#blkedit"/></svg></button><button class="col-span-2 row-span-2" aria-label="编辑属性"><svg><use href="#tagedit"/></svg><i></i></button>
          <button aria-label="定义属性"><svg><use href="#tag"/></svg></button><button aria-label="块属性"><svg><use href="#blk1"/></svg></button><button aria-label="写块"><svg><use href="#blk2"/></svg></button><button aria-label="设置基点"><svg><use href="#blk3"/></svg></button><button aria-label="同步属性"><svg><use href="#tagsync"/></svg></button><button aria-label="属性管理器"><svg><use href="#tagmgr"/></svg></button><button aria-label="替换块"><svg><use href="#blkrep"/></svg></button>
        </div>
      </section>
      <section class="h-[120px]">
        <header><span></span>修改<button aria-label="修改设置"><svg><use href="#gear"/></svg></button></header>
        <div>
          <button class="col-span-2 row-span-2" aria-label="移动"><svg><use href="#move"/></svg></button><button aria-label="复制"><svg><use href="#copy"/></svg></button><button aria-label="旋转"><svg><use href="#rotate"/></svg></button><button class="col-span-2 row-span-2" aria-label="修剪"><svg><use href="#trim"/></svg><i></i></button><button aria-label="圆角"><svg><use href="#fillet"/></svg><i></i></button><button aria-label="阵列"><svg><use href="#array"/></svg><i></i></button>
          <button aria-label="镜像"><svg><use href="#mirror"/></svg></button><button aria-label="选择移动"><svg><use href="#selmove"/></svg></button><button aria-label="偏移"><svg><use href="#offset"/></svg></button><button aria-label="三维"><svg><use href="#box"/></svg></button>
          <button aria-label="拉伸"><svg><use href="#stretch"/></svg></button><button aria-label="更改空间"><svg><use href="#cubes"/></svg></button><button aria-label="缩放"><svg><use href="#scale"/></svg></button><button aria-label="打断"><svg><use href="#extend"/></svg><i></i></button><button aria-label="合并"><svg><use href="#join"/></svg></button><button aria-label="绘图次序"><svg><use href="#swap"/></svg></button><button aria-label="复制嵌套对象"><svg><use href="#copynest"/></svg></button><button aria-label="删除重复"><svg><use href="#broom"/></svg></button>
        </div>
      </section>
      <section class="h-[90px]">
        <header><span></span>文字<button aria-label="文字设置"><svg><use href="#gear"/></svg></button></header>
        <div>
          <button class="col-span-2 row-span-2" aria-label="多行文字"><svg><use href="#mtext"/></svg></button><button class="col-span-2 row-span-2" aria-label="文字样式"><svg><use href="#mtextb"/></svg></button><button aria-label="单行文字"><svg><use href="#textu"/></svg></button><button aria-label="拼写检查"><svg class="overflow-visible" viewBox="0 0 20 20"><text x="10" y="7" text-anchor="middle" font-size="8" font-weight="600" fill="#dcdde0" stroke="none">ABC</text><path d="M4 13.500L8 17.500 15 10" stroke="#62cf8c" stroke-width="2.600"/></svg></button><button aria-label="样式列表"><svg><use href="#styleA"/></svg></button><button aria-label="PDF 文字"><svg class="overflow-visible" viewBox="0 0 20 20"><text x="7" y="6" text-anchor="middle" font-size="7" font-weight="600" fill="#dcdde0" stroke="none">PDF</text><path d="M3 9V14H6" stroke-width="1.300"/><path d="M5.500 11V17L9.500 14z" fill="#dcdde0" stroke="none"/><path d="M14.500 9L11 19M14.500 9L18 19M12 16H17" stroke="#6db7ef" stroke-width="1.500"/></svg></button>
          <button aria-label="字段"><svg><use href="#textnote"/></svg></button><button aria-label="查找文字"><svg><use href="#findA"/></svg></button><button aria-label="更新文字"><svg><use href="#styleup"/></svg></button><button aria-label="PDF 设置"><svg class="overflow-visible" viewBox="0 0 20 20"><text x="6" y="5" text-anchor="middle" font-size="7" font-weight="600" fill="#dcdde0" stroke="none">PDF</text><path d="M3 7V13H6" stroke-width="1.300"/><path d="M5.500 10V16L9.500 13z" fill="#dcdde0" stroke="none"/><path d="M13 9L10 18M13 9L14.500 14" stroke-width="1.300"/><path d="M12 19.500L18 12.500" stroke="#6db7ef" stroke-width="2"/><path d="M16.500 9.500L16 13.500 20.500 13" stroke="#6db7ef" stroke-width="1.500"/></svg></button>
        </div>
      </section>
      <section class="h-[90px]">
        <header><span></span>标注<button aria-label="标注设置"><svg><use href="#gear"/></svg></button></header>
        <div>
          <button class="col-span-2 row-span-2" aria-label="智能标注"><svg><use href="#dim"/></svg></button><button class="col-span-2 row-span-2" aria-label="标注样式"><svg><use href="#dimb"/></svg></button><button aria-label="线性标注"><svg><use href="#dimlin"/></svg><i></i></button><button aria-label="圆心标记"><svg><use href="#dimrad"/></svg><i></i></button><button aria-label="坐标标注"><svg><use href="#dimord"/></svg></button><button aria-label="标注间距"><svg><use href="#dimspace"/></svg></button>
          <button aria-label="连续标注"><svg><use href="#dimcont"/></svg><i></i></button><button aria-label="公差"><svg viewBox="0 0 20 20"><path d="M.7 3H19.300V17H.7zM11.500 3V17" stroke-width="1.200"/><circle cx="6" cy="10" r="2.700" stroke-width="1.300"/><path d="M6 5.500V14.500M1.800 10H10.200" stroke-width="1.200"/><text x="15.200" y="14" text-anchor="middle" font-size="9" font-weight="500" fill="#dcdde0" stroke="none">.1</text></svg></button><button aria-label="检验标注"><svg><use href="#dimchk"/></svg></button><button aria-label="折弯标注"><svg><use href="#dimjog"/></svg><i></i></button>
        </div>
      </section>
      <section class="h-[90px]">
        <header><span></span>引线<button aria-label="引线设置"><svg><use href="#gear"/></svg></button></header>
        <div>
          <button class="col-span-2 row-span-2" aria-label="多重引线"><svg><use href="#leader"/></svg></button><button class="col-span-2 row-span-2" aria-label="引线样式"><svg><use href="#leaderb"/></svg></button><button aria-label="添加引线"><svg><use href="#ladd"/></svg></button><button aria-label="对齐引线"><svg><use href="#lalign"/></svg></button><button aria-label="快速引线"><svg><use href="#lquick"/></svg></button>
          <button class="col-start-5" aria-label="删除引线"><svg><use href="#ldel"/></svg></button><button aria-label="合并引线"><svg><use href="#lcol"/></svg></button>
        </div>
      </section>
      <section class="h-[80px]">
        <header><span></span>表<button aria-label="表设置"><svg><use href="#gear"/></svg></button></header>
        <div>
          <button class="col-span-2 row-span-2 bg-[#333b49]" aria-label="表格"><svg><use href="#table"/></svg></button><button class="col-span-2 row-span-2" aria-label="数据链接"><svg><use href="#datalink"/></svg></button><button aria-label="表格样式"><svg><use href="#styleA"/></svg></button><button aria-label="更新数据"><svg><use href="#tsync"/></svg></button>
          <button class="col-start-5" aria-label="下载数据"><svg><use href="#tdown"/></svg></button>
        </div>
      </section>
    </div>
    <div class="flex h-[30px] shrink-0 items-center gap-[20px] bg-[#3b4453] pl-2">
      <button aria-label="添加工具集"><svg class="h-[18px] w-[18px]" viewBox="0 0 18 18"><path d="M9 2.500V15.500M2 9H16" stroke-width="1.400"/></svg></button>
      <button aria-label="工具集列表"><svg class="h-[18px] w-[18px]" viewBox="0 0 18 18"><path d="M4 3.500H17M1 8.500H11M12 8.500H17M0 11.500H11M13 11.500H17M4 15H17" stroke-width="1.500"/></svg></button>
    </div>
  </aside>

  <div class="flex min-w-0 flex-1 flex-col">
    <div class="flex min-h-0 flex-1">

      <!-- Document area -->
      <div class="flex min-w-0 flex-1 flex-col">
        <div class="flex h-7 shrink-0 border-b border-[#2b3442] bg-[#3a4555]">
          <button class="flex w-[30px] items-center justify-center border-r-2 border-[#2f3947]" aria-label="开始"><svg class="size-[18px]" viewBox="0 0 18 18"><path d="M0 0H8.500V8.500H0z" fill="#82c4f5" stroke="none"/><path d="M10 1H17.500V8.500H10zM1 10H8.500V17.500H1zM10 10H17.500V17.500H10z" fill="#cfd1d4" stroke="none"/></svg></button>
          <button class="flex w-[29px] items-center justify-center border-r border-[#2f3947]" aria-label="新建图形"><svg class="size-[14px]" viewBox="0 0 14 14"><path d="M7 0V14M0 7H14" stroke-width="1.300"/></svg></button>
          <button class="w-[161px] border-r border-[#2f3947] bg-[#4c5971] pb-[2px] pl-1 text-left text-sm font-semibold text-[#eef0f2]">Drawing1</button>
        </div>
        <main class="relative min-h-0 flex-1 overflow-hidden bg-[#222931]">
          <svg class="absolute inset-0 size-full" aria-hidden="true"><rect width="100%" height="100%" fill="url(#minor)" stroke="none"/><rect width="100%" height="100%" fill="url(#major)" stroke="none"/></svg>

          <div class="absolute top-1 left-4 flex h-6 items-center text-sm text-[#a1a4a8]">
            <button class="w-[10px]" aria-label="视口控件"><svg class="size-[9px]" viewBox="0 0 9 9"><path d="M4.500 0V9M0 4.500H9" stroke="#a1a4a8"/></svg></button>
            <button class="ml-[15px] flex items-center gap-[6px]"><span class="h-[17px] w-[1px] bg-[#a1a4a8]"></span>俯视</button>
            <button class="ml-[9px] flex items-center gap-[7px]"><span class="h-[17px] w-[1px] bg-[#a1a4a8]"></span>二维线框</button>
          </div>

          <svg class="absolute top-0 left-[724px] h-[86px] w-[162px]" viewBox="0 0 162 86" aria-hidden="true"><path d="M0 4.500H76M85 4.500H161M80.500 9V85M76.500 .5H84.500V8.500H76.500z" stroke="#d6d8da"/></svg>

          <svg class="absolute top-[17px] right-[17px] h-[190px] w-[150px]" viewBox="0 0 150 190">
            <circle cx="75" cy="75" r="60.500" stroke="#464c54" stroke-width="16"/>
            <g fill="#aaadb1" stroke="none" font-size="21" text-anchor="middle"><text x="75" y="20">北</text><text x="75" y="147">南</text><text x="11" y="84">西</text><text x="138" y="84">东</text></g>
            <rect x="46" y="46" width="58" height="58" fill="#a4a8ac" stroke="#b5b8bb"/><rect x="57" y="57" width="36" height="36" fill="#989ca1" stroke="none"/>
            <text x="75" y="88" font-size="36" font-weight="300" text-anchor="middle" fill="#50565d" stroke="none">上</text>
            <rect x="44" y="176" width="62" height="14" rx="4" fill="#7e888e" stroke="none"/>
            <text x="48" y="188" font-size="14" fill="#262d34" stroke="none">WCS</text><path d="M90 180.500H100L95 186z" stroke="#262d34" fill="#98a1a6"/>
          </svg>

          <svg class="absolute bottom-0 left-[13px] h-[110px] w-[96px]" viewBox="0 0 96 110"><path d="M6.500 27V89.500H69M1 83.500H12.500V95.500H1z" stroke="#c3c6c9"/><g fill="#c3c6c9" stroke="none" font-size="22" font-weight="200" text-anchor="middle"><text x="16" y="22">Y</text><text x="83" y="87">X</text></g></svg>

          <form class="absolute bottom-0 left-1/2 flex h-[31px] w-[625px] -translate-x-1/2 items-center bg-[#3b4555] pr-3 pl-[10px]">
            <button type="button" class="mr-[18px] flex items-center" aria-label="最近的命令"><svg class="h-[18px] w-[28px]" viewBox="0 0 28 18"><path d="M1 3.500L6.500 6.500 1 9.500M10 12.500H17.500" stroke-width="1.300"/><path d="M21 5.500H28L24.500 9.500z" fill="#c9ccd0" stroke="none"/></svg></button>
            <input class="min-w-0 flex-1 bg-transparent text-sm outline-none placeholder:text-[#a3a9b3]" aria-label="命令行" placeholder="键入命令">
            <button type="button" class="mr-[14px]" aria-label="命令历史"><svg class="h-[6px] w-2" viewBox="0 0 8 6"><path d="M4 0L8 6H0z" fill="#adb2ba" stroke="none"/></svg></button>
            <button type="button" aria-label="弹出命令行"><svg class="h-[18px] w-[17px]" viewBox="0 0 17 18"><path d="M6 5H1V16.500H16V5H11M4 5V16" stroke-width="1.400"/><path d="M8.500 12V3" stroke="#6db7ef" stroke-width="1.600"/><path d="M8.500 0L11.500 4H5.500z" fill="#6db7ef" stroke="none"/></svg></button>
          </form>
        </main>
      </div>

      <!-- Palettes -->
      <aside class="flex w-[280px] shrink-0 flex-col overflow-hidden border-l-2 border-[#2b3442] bg-[#3a4453]">
        <div class="flex h-7 shrink-0 [&_button]:flex [&_button]:h-full [&_button]:items-center [&_button]:justify-center [&_svg]:size-5">
          <button class="w-[64px]" aria-label="图层选项卡"><svg><use href="#lyinfo"/></svg></button>
          <button class="w-[66px] border-b border-l border-[#262d39] bg-[#2f3543]" aria-label="参照选项卡"><svg viewBox="0 0 20 20"><path d="M0 7H14V10H20V18H0z" fill="#dcdde0" stroke="none"/><path d="M15 5L20 9H15z" fill="#f7f7f7" stroke="none"/><path d="M7.500 3.500V9a3 3 0 0 1-6 0V3.500a2.500 2.500 0 0 1 5 0V8.500a1.500 1.500 0 0 1-2.500 0V4" stroke="#2f3543" stroke-width="3.400"/><path d="M7.500 3.500V9a3 3 0 0 1-6 0V3.500a2.500 2.500 0 0 1 5 0V8.500a1.500 1.500 0 0 1-2.500 0V4" stroke-width="1.200"/></svg></button>
          <button class="relative w-[65px] border-b border-l border-[#262d39] bg-[#2f3543]" aria-label="工具选项卡"><svg viewBox="0 0 20 20"><path d="M2 2H18V18H2z" fill="#dcdde0" stroke="none"/><path d="M4 5H16" stroke="#50565f" stroke-width="2"/><path d="M4 9.500H16M4 12.500H16M4 15.500H16M7.500 8V17M12 8V17" stroke="#50565f"/></svg><span class="absolute top-0 right-[17px] size-[11px] rounded-full bg-[#f96d3d]"></span></button>
          <div class="w-[68px] border-b border-l border-[#262d39] bg-[#2f3543]"></div>
          <button class="flex-1 overflow-hidden border-b border-[#262d39]" aria-label="折叠面板"><svg class="ml-3" viewBox="0 0 20 20"><path d="M5 6.500L8.500 10 5 13.500M10 6.500L13.500 10 10 13.500" stroke="#aeb3bb" stroke-width="1.100"/></svg></button>
        </div>

        <section class="h-[187px] shrink-0 border-b border-[#242d39]">
          <div class="flex h-[22px] items-center justify-between pl-3"><h2 class="text-[15px] font-medium">图层</h2><button class="w-[11px] overflow-hidden" aria-label="停靠图层"><svg class="size-[17px]"><use href="#dock"/></svg></button></div>
          <div class="mt-[19px] flex h-5 gap-[10px] overflow-hidden pl-[17px] [&_svg]:size-5">
            <button aria-label="图层特性"><svg><use href="#lyblue"/></svg></button><button aria-label="图层匹配"><svg><use href="#lybrush"/></svg></button><button aria-label="上一个图层"><svg><use href="#lyback"/></svg></button><button aria-label="图层隔离"><svg><use href="#lyin"/></svg></button><button aria-label="取消隔离"><svg><use href="#lyout"/></svg></button><button aria-label="冻结图层"><svg><use href="#lyfreeze"/></svg></button><button aria-label="关闭图层"><svg><use href="#lybulb"/></svg></button><button aria-label="锁定图层"><svg><use href="#lylock"/></svg></button><button aria-label="解锁图层"><svg><use href="#lyunlock"/></svg></button>
          </div>
          <div class="relative mt-[15px] ml-3">
            <select class="h-[30px] w-full appearance-none rounded-l-xs border border-r-0 border-[#303947] bg-[#4f5a70] pl-[101px] text-[15px] font-medium" aria-label="当前图层"><option>0</option></select>
            <svg class="pointer-events-none absolute top-[7px] left-[13px] h-4 w-[76px]" viewBox="0 0 76 16"><circle cx="5" cy="8" r="5" fill="#dcdde0" stroke="none"/><path d="M22.500 8h8v6h-8zM24 8V5a2.500 2.500 0 0 1 5 0V8M26.500 10V12" stroke="#69748a" stroke-width="1.300"/><g stroke="#69748a"><use href="#flake" x="42" y="2" width="12" height="12"/></g><path d="M63.500 2.500H73.500V12.500H63.500z" fill="#fff" stroke="#111"/></svg>
            <svg class="pointer-events-none absolute top-3 right-0 h-[6px] w-[7px]" viewBox="0 0 7 6"><path d="M0 0H8L4 6z" fill="#d9dbde" stroke="none"/></svg>
          </div>
          <div class="relative mt-[4px] ml-[13px]">
            <select class="h-[31px] w-full appearance-none rounded-l-xs border border-r-0 border-[#303947] bg-[#4f5a70] pl-[7px] text-sm font-medium text-[#eceef0]" aria-label="图层状态"><option>未保存的图层状态</option></select>
            <svg class="pointer-events-none absolute top-3 right-px h-[6px] w-2" viewBox="0 0 8 6"><path d="M0 0H8L4 6z" fill="#d9dbde" stroke="none"/></svg>
          </div>
          <button class="mt-[6px] ml-[19px] flex h-[22px] items-center gap-[14px] text-sm text-[#c6cad0]"><svg class="h-[10px] w-[9px]" viewBox="0 0 9 10"><path d="M1 0L6 5 1 10" stroke-width="1.600"/></svg>显示图层列表</button>
        </section>

        <section class="min-h-0 flex-1">
          <div class="flex h-5 items-center pl-3">
            <h2 class="flex-1 pt-[2px] text-[15px] font-medium">特性</h2>
            <div class="mr-3 flex h-4 self-start border border-t-0 border-[#2d3644] text-[10px]"><button class="w-9 bg-[#3f4959] text-[#87909e]">全部</button><button class="w-[37px] bg-[#4f5b71] font-medium text-[#eceef0]">我的</button></div>
            <button class="mr-[14px]" aria-label="自定义特性"><svg class="h-4 w-[18px]" viewBox="0 0 18 16"><path d="M1 0V14H7M4 2.500H13M4 6H11M4 9.500H9" stroke-width="1.400"/><path d="M8 15V11L14 4 18 8 12 15z" fill="#dcdde0" stroke="#3a4453" stroke-width=".6"/></svg></button>
            <button class="w-[10px] overflow-hidden" aria-label="停靠特性"><svg class="size-[17px]"><use href="#dock"/></svg></button>
          </div>
          <div class="relative mt-3 ml-[13px]">
            <select disabled class="h-[26px] w-full appearance-none border border-r-0 border-[#384150] bg-[#424c5d] pl-[7px] text-sm text-[#7d8694] opacity-100" aria-label="选择类型"><option>模型空间</option></select>
            <svg class="pointer-events-none absolute top-[10px] right-[3px] h-[5px] w-[7px]" viewBox="0 0 7 5"><path d="M0 0H7L3.500 5z" fill="#7d8694" stroke="none"/></svg>
          </div>
          <div class="mt-[6px] grid h-[460px] auto-rows-fr text-sm [&>div]:grid [&>div]:grid-cols-[125px_minmax(0,1fr)] [&>div]:items-center [&>div]:gap-3 [&>div]:pr-px [&_label]:text-right [&_label]:text-[#d3d6db] [&_p]:relative [&_p]:flex [&_p]:gap-1 [&_select]:h-6 [&_select]:w-full [&_select]:min-w-0 [&_select]:appearance-none [&_select]:rounded-xs [&_select]:border [&_select]:border-[#303947] [&_select]:bg-[#4f5a70] [&_select]:pl-[7px] [&_select]:font-medium [&_select]:text-[#eceef0] [&_input]:h-6 [&_input]:w-full [&_input]:min-w-0 [&_input]:rounded-xs [&_input]:border [&_input]:border-[#303947] [&_input]:bg-[#4f5a70] [&_input]:pl-[4px] [&_input]:font-medium [&_input]:text-[#eceef0] [&_input:disabled]:border-[#384150] [&_input:disabled]:bg-[#414b5b] [&_input:disabled]:font-normal [&_input:disabled]:text-[#848c99] [&_i]:pointer-events-none [&_i]:absolute [&_i]:top-[9px] [&_i]:right-[6px] [&_i]:h-[6px] [&_i]:w-[7px] [&_i]:bg-[#d9dbde] [&_i]:[clip-path:polygon(0_0,100%_0,50%_100%)]">
            <div><label for="p1">颜色</label><p><select id="p1" class="indent-[28px]"><option>ByLayer</option></select><span class="pointer-events-none absolute top-[6px] left-[10px] size-3 border border-[#15181d] bg-white"></span><i></i></p></div>
            <div><label for="p2">图层</label><p><select id="p2"><option>0</option></select><i></i></p></div>
            <div><label for="p3">线型</label><p><select id="p3" class="indent-[59px]"><option>ByLayer</option></select><span class="pointer-events-none absolute top-3 left-[9px] h-px w-10 bg-[#e6e8ea]"></span><i></i></p></div>
            <div><label for="p4">线型比例</label><p><input id="p4" value="1.0000"></p></div>
            <div><label for="p5">线宽</label><p><select id="p5"><option>ByLayer</option></select><i></i></p></div>
            <div><label for="p6">透明度</label><p><input id="p6" class="flex-1 pr-[2px] text-right" value="0"><span class="pointer-events-none absolute top-[2px] left-1 h-5 w-[2px] border-y-4 border-[#62aee6]"></span><span class="pointer-events-none absolute top-[13px] left-[43px] h-[9px] w-px bg-[#75819a]"></span><button class="flex h-6 w-12 shrink-0 items-center rounded-xs border border-[#303947] bg-[#4f5a70] pl-[9px]" aria-label="透明度来源"><svg class="size-4" viewBox="0 0 16 16"><path d="M6 1H16L10 6.500H0z" fill="#6db7ef" stroke="none"/><path d="M1 10H10L15 6M1 14H10L15 10" stroke-width="1.700"/></svg></button><i></i></p></div>
            <div><label for="p7">文字样式</label><p><select id="p7"><option>Standard</option></select><i></i></p></div>
            <div><label for="p8">标注样式</label><p><select id="p8"><option>Standard</option></select><i></i></p></div>
            <div><label for="p9">多重引线样式</label><p><select id="p9"><option>Standard</option></select><i></i></p></div>
            <div><label for="p10">表格样式</label><p><select id="p10"><option>Standard</option></select><i></i></p></div>
            <div><label for="p11">注释比例</label><p><select id="p11"><option>1:1</option></select><i></i></p></div>
            <div><label for="p12">文字高度</label><p><input id="p12" class="flex-1" value="0.2000"><button class="flex h-6 w-[23px] shrink-0 items-center justify-center rounded-xs border border-[#303947]" aria-label="拾取高度"><svg class="size-[20px]" viewBox="0 0 20 20"><path d="M1 1V19M19 1V8M14.500 9V20M9 14.500H20M11.500 11.500h6v6h-6z" stroke-width="1.100"/><path d="M3 4H17" stroke="#6db7ef"/><path d="M3 4L6 2V6zM17 4L14 2V6z" fill="#6db7ef" stroke="none"/></svg></button></p></div>
            <div><label for="p13">打印样式</label><p><select id="p13"><option>ByLayer</option></select><i></i></p></div>
            <div><label for="p14">打印样式表</label><p><select id="p14"><option>无</option></select><i></i></p></div>
            <div><label for="p15">打印样式附...</label><p><input id="p15" disabled value="模型"></p></div>
            <div><label for="p16">打印表类型</label><p><input id="p16" disabled value="不可用"></p></div>
          </div>
        </section>
      </aside>
    </div>

    <!-- Layout tabs and status bar -->
    <footer class="flex h-[30px] shrink-0 items-stretch border-t border-b border-[#2b3442] bg-[#384251]">
      <button class="w-[74px] bg-[#4c5971] pr-1 pb-[2px] text-sm font-semibold text-[#eceef0]">模型</button>
      <button class="flex w-[30px] items-center justify-center border-x border-[#2b3442]" aria-label="新建布局"><svg class="size-[14px]" viewBox="0 0 14 14"><path d="M7 0V14M0 7H14" stroke-width="1.300"/></svg></button>
      <button class="relative w-[74px] pb-[2px] pr-1 text-sm text-[#b4b9c1]">布局1<span class="absolute top-0 right-px size-[11px] rounded-full bg-[#f96d3d]"></span></button>
      <button class="w-[73px] border-r-2 border-[#2b3442] pb-[2px] text-sm text-[#b4b9c1]">布局2</button>
      <div class="flex-1"></div>
      <output class="flex w-[192px] items-center border-l-2 border-[#2b3442] pl-[10px] text-sm whitespace-nowrap text-[#c0c4cb]">113.3269, 79.9593, 0.0000</output>
      <div class="grid w-[358px] grid-cols-13 items-center [&_button]:flex [&_button]:h-[26px] [&_button]:w-[25px] [&_button]:items-center [&_button]:justify-center [&_button[aria-pressed=true]]:bg-[#5b8bc3] [&_svg]:size-5 [&_svg]:stroke-[#f0f2f4]">
        <button aria-pressed="true" aria-label="栅格"><svg viewBox="0 0 20 20"><path d="M5 0V20M10 0V20M15 0V20M0 5H20M0 10H20M0 15H20" stroke-width="1.300"/></svg></button>
        <button aria-label="捕捉"><svg viewBox="0 0 20 20"><path d="M2 3H19M2 8H19M2 13H19M2 18H19" stroke="#e3e6e9" stroke-width="2" stroke-dasharray="2 3"/></svg></button>
        <button aria-label="正交"><svg viewBox="0 0 20 20"><path d="M1 0V19H20M1 13.500H7V19" stroke-width="1.300"/></svg></button>
        <button aria-pressed="true" aria-label="极轴"><svg viewBox="0 0 20 20"><circle cx="9" cy="11" r="8" stroke-width="1.400"/><path d="M9 11H20M9 11L17 3" stroke-width="1.300"/><path d="M14 6.500V14" stroke-width="1.300"/></svg></button>
        <button aria-pressed="true" aria-label="动态输入"><svg viewBox="0 0 20 20"><path d="M4 1V9M0 5H8M0 16H6" stroke-width="1.300"/><path d="M8 13H20V18H8z" fill="#fff" stroke="none"/></svg></button>
        <button aria-label="线宽显示"><svg viewBox="0 0 20 20"><path d="M0 7H10M0 12H10M0 17H10" stroke-width="3"/><path d="M0 2.500H20M10 7H20M10 12H20M10 16.500H20" stroke-width="1.200"/></svg></button>
        <button aria-pressed="true" aria-label="透明度显示"><svg viewBox="0 0 20 20"><path d="M1 1H19V19H1z" stroke-width="1.400"/><path d="M4 5H16M6 7H16M4 9H16M6 11H16M4 13H16M6 15H16" stroke-width="1.800" stroke-dasharray="2 2"/></svg></button>
        <button aria-pressed="true" aria-label="选择循环"><svg viewBox="0 0 20 20"><path d="M4 1H1V17H4M11 1H14V8M4 3.500H10V7.500H4zM10 14A3 3 0 1 1 10 9.500" stroke-width="1.300"/><path d="M10 7V18L13 16 15 20 17.500 19 15.500 15H19z" fill="#fff" stroke="#5b8bc3" stroke-width=".7"/></svg></button>
        <button aria-pressed="true" aria-label="对象追踪"><svg viewBox="0 0 20 20"><path d="M20 18.500H1L16 2" stroke-width="1.400"/><path d="M6 8.500L11 8 10.500 12.500z" fill="#fff" stroke="none"/></svg></button>
        <button aria-pressed="true" aria-label="对象捕捉"><svg viewBox="0 0 20 20"><path d="M6 3.500H19V19H3.500V6" stroke-width="1.400"/><path d="M.7 .7H6V6H.7z" stroke-width="1.400"/></svg></button>
        <button aria-pressed="true" aria-label="注释可见性"><svg viewBox="0 0 20 20"><path d="M8.500 0L13 11 17 19 11.500 16 8.500 19 5.500 16 0 19 4 11z" fill="#fff" stroke="none"/><circle cx="16" cy="4" r="4" fill="#fff" stroke="#5b8bc3" stroke-width=".8"/></svg></button>
        <button aria-label="自动缩放注释"><svg viewBox="0 0 20 20"><path d="M8.500 1L13 11 17 19 11.500 16 8.500 20 5.500 16 0 19 4 11z" fill="#dcdde0" stroke="none"/><path d="M18 -1L12 5H15.500L13 11 20 4H16z" fill="#f4cd79" stroke="none"/></svg></button>
        <button aria-label="注释比例"><svg viewBox="0 0 20 20"><path d="M10 1L13 11 19 19 12.500 16 10 20 7.500 16 1 19 7 11z" fill="#dcdde0" stroke="none"/></svg></button>
      </div>
      <button class="flex w-[31px] items-center gap-[5px] pb-[2px] text-[13px] text-[#c6cad0]" aria-label="比例 1:1">1:1<svg class="h-[6px] w-[7px]" viewBox="0 0 7 6"><path d="M0 0H7L3.500 6z" fill="#d9dbde" stroke="none"/></svg></button>
      <button class="flex w-[34px] items-center justify-center" aria-label="隔离对象"><svg class="size-5" viewBox="0 0 20 20"><path d="M.8 1.500H8V8.500H.8zM8.500 12L12.500 19H4.500z" stroke-width="1.200"/><circle cx="15.500" cy="7.500" r="4" stroke-width="1.200"/></svg></button>
      <button class="flex w-[13px] items-center overflow-hidden" aria-label="自定义"><svg class="size-[19px]" viewBox="0 0 20 20"><circle cx="10" cy="10" r="5" stroke-width="4"/><path d="M10 0V4M10 16V20M0 10H4M16 10H20M3 3L6 6M14 14L17 17M17 3L14 6M3 17L6 14" stroke-width="3.500"/></svg></button>
    </footer>
  </div>
</div>
</body>
</html>
